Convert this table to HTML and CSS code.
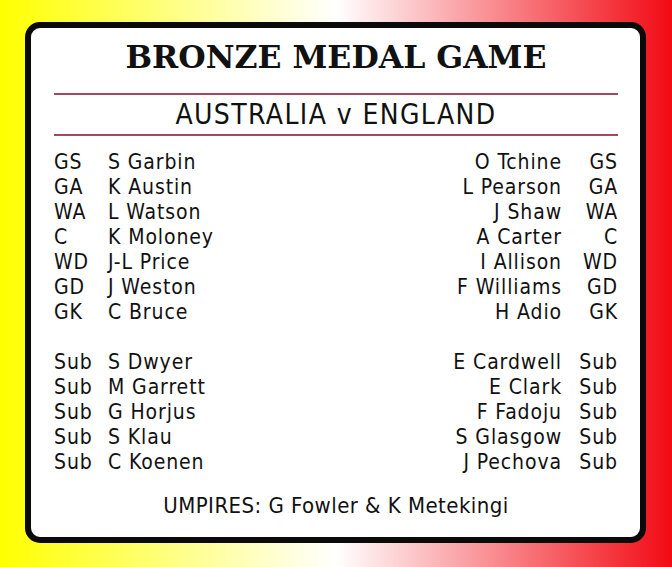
FILE: index.html
```html
<!DOCTYPE html>
<html>
<head>
<meta charset="utf-8">
<link rel="stylesheet" href="styles.css">
</head>
<body>
<div class="card">
  <h1 class="title">BRONZE MEDAL GAME</h1>
  <h2 class="match">AUSTRALIA v ENGLAND</h2>
  <div class="teams">
    <span class="pos">GS</span><span class="name">S Garbin</span><span class="name r">O Tchine</span><span class="pos r">GS</span>
    <span class="pos">GA</span><span class="name">K Austin</span><span class="name r">L Pearson</span><span class="pos r">GA</span>
    <span class="pos">WA</span><span class="name">L Watson</span><span class="name r">J Shaw</span><span class="pos r">WA</span>
    <span class="pos">C</span><span class="name">K Moloney</span><span class="name r">A Carter</span><span class="pos r">C</span>
    <span class="pos">WD</span><span class="name">J-L Price</span><span class="name r">I Allison</span><span class="pos r">WD</span>
    <span class="pos">GD</span><span class="name">J Weston</span><span class="name r">F Williams</span><span class="pos r">GD</span>
    <span class="pos">GK</span><span class="name">C Bruce</span><span class="name r">H Adio</span><span class="pos r">GK</span>
    <span class="spacer"></span>
    <span class="pos">Sub</span><span class="name">S Dwyer</span><span class="name r">E Cardwell</span><span class="pos r">Sub</span>
    <span class="pos">Sub</span><span class="name">M Garrett</span><span class="name r">E Clark</span><span class="pos r">Sub</span>
    <span class="pos">Sub</span><span class="name">G Horjus</span><span class="name r">F Fadoju</span><span class="pos r">Sub</span>
    <span class="pos">Sub</span><span class="name">S Klau</span><span class="name r">S Glasgow</span><span class="pos r">Sub</span>
    <span class="pos">Sub</span><span class="name">C Koenen</span><span class="name r">J Pechova</span><span class="pos r">Sub</span>
  </div>
  <p class="umpires">UMPIRES: G Fowler &amp; K Metekingi</p>
</div>
</body>
</html>
```
FILE: styles.css
```css
html, body {
  margin: 0;
  padding: 0;
}
body {
  width: 672px;
  height: 567px;
  box-sizing: border-box;
  padding: 22px 26px 0 25px;
  background: linear-gradient(to right, #ffff00 0%, #ffffff 50%, #f20a14 100%);
  font-family: "DejaVu Sans Condensed", "DejaVu Sans", sans-serif;
  color: #111;
}
.card {
  width: 621px;
  height: 521px;
  box-sizing: border-box;
  border: 6px solid #0a0a0a;
  border-radius: 15px;
  background: #fff;
  padding: 9px 22px 0 23px;
}
.title {
  margin: 0;
  font-family: "DejaVu Serif", serif;
  font-weight: bold;
  font-size: 31.5px;
  line-height: 40px;
  text-align: center;
}
.match {
  margin: 16px 0 0;
  border-top: 2px solid #a04a5c;
  border-bottom: 2px solid #a04a5c;
  font-weight: normal;
  font-size: 28px;
  letter-spacing: 1.4px;
  line-height: 39px;
  text-align: center;
}
.teams {
  margin-top: 14px;
  display: grid;
  grid-template-columns: 54px 1fr 1fr 56px;
  grid-auto-rows: 25px;
  font-size: 21px;
  letter-spacing: 0.9px;
  line-height: 25px;
}
.spacer {
  grid-column: 1 / -1;
}
.r {
  text-align: right;
}
.umpires {
  margin: 18px 0 0;
  font-size: 22px;
  letter-spacing: 0.45px;
  line-height: 25px;
  text-align: center;
}
```
